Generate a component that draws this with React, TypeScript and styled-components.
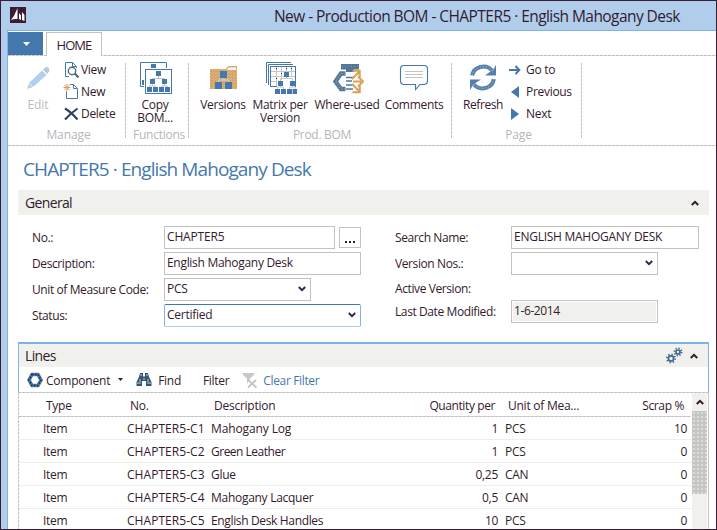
import React from "react";
import styled, { createGlobalStyle } from "styled-components";

const ink = "#331a2e";
const blue = "#4478ad";
const sky = "#7fb2e8";
const grey = "#c4c2bd";
const panel = "#f0f1ec";
const orange = "#d9a057";
const dashH = "repeating-linear-gradient(90deg, #c2c2c2 0 3px, #e6e6e6 3px 4px)";
const dashV = "repeating-linear-gradient(180deg, #c2c2c2 0 3px, #f2f2f2 3px 4px)";

const Global = createGlobalStyle`
  * { box-sizing: border-box; }
  body { margin: 0; background: #fff; overflow: hidden; }
`;

const Window = styled.div`
  width: 717px;
  height: 530px;
  border: 1px solid #3c1c32;
  display: flex;
  flex-direction: column;
  background: #b0ceec;
  color: ${ink};
  font: 12px/16px "Open Sans", "Noto Sans", sans-serif;
  letter-spacing: -0.4px;
  white-space: nowrap;
  overflow: hidden;
`;

const TitleBar = styled.header`
  height: 29px;
  flex: none;
  display: flex;
  padding-left: 9px;
`;
const AppLogo = styled.svg`
  width: 16px;
  height: 16px;
  margin-top: 6px;
`;
const WindowTitle = styled.h1`
  margin: 3px 0 0 248px;
  font-size: 15.5px;
  font-weight: 400;
  line-height: 24px;
  letter-spacing: -0.56px;
`;

const Client = styled.main`
  flex: 1;
  min-height: 0;
  margin-left: 6px;
  border-left: 1px solid ${sky};
  border-top: 1px solid ${sky};
  background: #fff;
  display: flex;
  flex-direction: column;
`;

const TabRow = styled.div`
  height: 25px;
  flex: none;
  display: flex;
  padding-top: 1px;
  background: ${dashH} bottom / 100% 1px no-repeat;
`;
const AppMenu = styled.button`
  width: 35px;
  height: 23px;
  border: 0;
  padding: 0;
  background: ${blue};
  display: flex;
  align-items: center;
  justify-content: center;
`;
const HomeTab = styled.div`
  width: 56px;
  height: 24px;
  margin-left: 3px;
  border: 1px solid ${grey};
  border-bottom: 0;
  background: #fff;
  font-size: 13px;
  line-height: 25px;
  text-align: center;
  letter-spacing: -0.95px;
`;

const Ribbon = styled.div`
  height: 90px;
  flex: none;
  display: flex;
  padding-top: 7px;
  background: ${dashH} bottom / 100% 1px no-repeat;
`;
const Group = styled.section<{ $w: number }>`
  width: ${(p) => p.$w}px;
  height: 75px;
  flex: none;
  display: flex;
  flex-direction: column;
  background: ${dashV} right / 1px 100% no-repeat;
`;
const GroupBody = styled.div<{ $pad: number }>`
  display: flex;
  flex: none;
  height: 64px;
  padding-left: ${(p) => p.$pad}px;
`;
const GroupName = styled.div<{ $ls?: number }>`
  text-align: center;
  color: #b4b6b8;
  line-height: 16px;
  padding-left: 3px;
  letter-spacing: ${(p) => p.$ls ?? -0.1}px;
`;
const Big = styled.div<{ $w: number; $off?: boolean; $ls?: number }>`
  width: ${(p) => p.$w}px;
  flex: none;
  display: flex;
  flex-direction: column;
  align-items: center;
  margin-top: -2px;
  line-height: 13px;
  text-align: center;
  letter-spacing: ${(p) => p.$ls ?? -0.3}px;
  color: ${(p) => (p.$off ? "#bcbdbe" : ink)};
`;
const BigIcon = styled.svg`
  width: 34px;
  height: 34px;
  margin-bottom: 3px;
  flex: none;
`;
const SmallList = styled.div<{ $ml: number }>`
  margin: -4px 0 0 ${(p) => p.$ml}px;
  display: flex;
  flex-direction: column;
`;
const Small = styled.div<{ $ls?: number }>`
  height: 22px;
  display: flex;
  align-items: center;
  letter-spacing: ${(p) => p.$ls ?? -0.3}px;
`;
const SmallIcon = styled.svg`
  width: 18px;
  height: 18px;
`;

const PageTitle = styled.h2`
  margin: 10px 0 0 15px;
  height: 34px;
  flex: none;
  font-size: 19px;
  line-height: 26px;
  font-weight: 400;
  color: ${blue};
  letter-spacing: -0.91px;
`;
const BarHead = styled.div<{ $h: number; $pl?: number }>`
  height: ${(p) => p.$h}px;
  flex: none;
  background: ${panel};
  display: flex;
  align-items: center;
  padding: 0 10px 0 ${(p) => p.$pl ?? 7}px;
  font-size: 14px;
  letter-spacing: -0.65px;
`;
const Spacer = styled.div`
  flex: 1;
`;
const General = styled.section`
  width: 691px;
  margin-left: 10px;
  height: 152px;
  flex: none;
`;
const Form = styled.div`
  display: flex;
  padding-top: 11px;
`;
const Column = styled.div<{ $ml: number }>`
  margin-left: ${(p) => p.$ml}px;
`;
const Row = styled.div<{ $h?: number; $label: number }>`
  display: grid;
  grid-template-columns: ${(p) => p.$label}px auto;
  justify-content: start;
  height: ${(p) => p.$h ?? 26}px;
`;
const Label = styled.label<{ $ls?: number }>`
  line-height: 23px;
  letter-spacing: ${(p) => p.$ls ?? -0.4}px;
`;
const FieldWrap = styled.div`
  display: flex;
  gap: 4px;
  align-items: center;
  height: 23px;
`;
const Field = styled.div<{ $w: number; $focus?: boolean; $ro?: boolean; $ls?: number }>`
  width: ${(p) => p.$w}px;
  height: 23px;
  border: 1px solid ${(p) => (p.$focus ? "#7fb2e8" : grey)};
  ${(p) => p.$focus && `border-top-color: ${blue}; border-bottom-color: #a9cbec; border-radius: 2px;`}
  background: ${(p) => (p.$ro ? panel : "#fff")};
  ${(p) => p.$ro && "box-shadow: inset 0 0 0 1px #fff;"}
  display: flex;
  align-items: center;
  justify-content: space-between;
  padding: 0 4px 1px 2px;
  letter-spacing: ${(p) => p.$ls ?? -0.3}px;
`;
const Assist = styled.button`
  width: 22px;
  height: 21px;
  border: 1px solid ${grey};
  background: #fff;
  padding: 8px 0 0;
  display: flex;
  justify-content: center;
  align-items: center;
`;

const Lines = styled.section`
  width: 691px;
  margin-left: 10px;
  flex: 1;
  min-height: 0;
  display: flex;
  flex-direction: column;
`;
const Focused = styled.div`
  border: 1px solid ${sky};
  border-top-width: 2px;
  border-bottom: 0;
  flex: none;
`;
const Toolbar = styled.div`
  height: 25px;
  display: flex;
  align-items: center;
  padding: 0 0 0 8px;
`;
const Tool = styled.span<{ $ml: number; $c?: string; $ls?: number }>`
  margin-left: ${(p) => p.$ml}px;
  color: ${(p) => p.$c ?? ink};
  letter-spacing: ${(p) => p.$ls ?? -0.3}px;
  padding-top: 2px;
`;
const Glyph = styled.svg<{ $w: number; $h: number; $ml?: number }>`
  width: ${(p) => p.$w}px;
  height: ${(p) => p.$h}px;
  margin-left: ${(p) => p.$ml ?? 0}px;
  flex: none;
`;
const GridBox = styled.div`
  flex: 1;
  min-height: 0;
  display: flex;
  border-right: 1px solid ${grey};
  background: ${dashH} top / 100% 1px no-repeat, ${dashV} left / 1px 100% no-repeat;
  padding: 1px 1px 0 1px;
`;
const Table = styled.div`
  width: 672px;
  flex: none;
  overflow: hidden;
`;
const cols = "108px 84px 184px 103px 109px 80px";
const HeadRow = styled.div`
  display: grid;
  grid-template-columns: ${cols};
  height: 24px;
  line-height: 25px;
  background: ${dashH} bottom / 100% 1px no-repeat;
  & > * { padding: 0 3px; }
`;
const BodyRow = styled.div`
  display: grid;
  grid-template-columns: ${cols};
  height: 23px;
  line-height: 23px;
  border-bottom: 1px solid #eeeeed;
`;
const Cell = styled.div<{ $r?: boolean; $pl?: number; $ls?: number }>`
  text-align: ${(p) => (p.$r ? "right" : "left")};
  padding-left: ${(p) => p.$pl ?? 0}px;
  letter-spacing: ${(p) => p.$ls ?? -0.3}px;
`;
const HCell = styled.div<{ $r?: boolean; $ind?: number; $ls?: number }>`
  text-align: ${(p) => (p.$r ? "right" : "left")};
  text-indent: ${(p) => p.$ind ?? 0}px;
  letter-spacing: ${(p) => p.$ls ?? -0.25}px;
`;
const Scroll = styled.div`
  width: 15px;
  flex: none;
  background: ${panel};
  margin-left: 1px;
`;
const ScrollUp = styled.div`
  height: 18px;
  display: flex;
  align-items: center;
  justify-content: center;
`;
const Thumb = styled.div`
  height: 83px;
  background: radial-gradient(#dcdcd8 0.7px, transparent 0.9px) 0 0 / 4px 4px #c5c5c4;
`;

const Chevron = ({ up, ml }: { up?: boolean; ml?: number }) => (
  <Glyph $w={8} $h={6} $ml={ml} viewBox="0 0 8 6">
    <path d={up ? "M0.8 5 4 1.8 7.2 5" : "M0.8 1 4 4.2 7.2 1"} fill="none" stroke={up ? ink : "#2b2c55"} strokeWidth="2" />
  </Glyph>
);

const Sq = ({ at, s = 5 }: { at: number[][]; s?: number }) => (
  <>{at.map(([x, y]) => <rect key={`${x}-${y}`} x={x} y={y} width={s} height={s} fill={blue} />)}</>
);

const EditIcon = () => (
  <BigIcon viewBox="0 0 34 34">
    <path d="M6 28 8 22 21 9.5 25.5 14 12 26Z" fill="#b2d0ec" />
    <path d="M22 8.5 24.5 6.2Q26.5 5.5 28.2 7.5 28.8 9 28 10.7L26 13Z" fill="#b2cbe0" />
    <path d="M8 22.5 12 26" stroke="#e4eef8" strokeWidth="1" />
  </BigIcon>
);
const CopyIcon = () => (
  <BigIcon viewBox="0 0 34 34">
    <path d="M28.5 7V1.5H2.5V25.5H6" fill="none" stroke={blue} />
    <rect x="13" y="3" width="5" height="4" fill={blue} /><rect x="4" y="19" width="2" height="5" fill={blue} />
    <rect x="7.5" y="8.5" width="26" height="24" fill="#fff" stroke={blue} />
    <path d="M20.5 15v3M14.5 20v-2.5H26.5V20M14.5 23v2M26.5 23v2M11.5 27v-2H17.5V27M23.5 27v-2H29.5V27" fill="none" stroke="#c8c4bf" />
    <Sq at={[[18, 10], [12, 18], [24, 18], [9, 26], [15, 26], [21, 26], [27, 26]]} />
  </BigIcon>
);
const VersionsIcon = () => (
  <BigIcon viewBox="0 0 34 34">
    <defs><pattern id="weave" width="3" height="3" patternUnits="userSpaceOnUse"><rect width="3" height="3" fill="#dba35c" /><rect width="1" height="1" fill="#c9bfb0" /><rect x="1" y="2" width="1" height="1" fill="#c9bfb0" /></pattern></defs>
    <path d="M4 28V8H20L22 5H31V28Z" fill="url(#weave)" />
    <path d="M22.5 6.5H30V9H21Z" fill="#fff" />
    <path d="M17.5 16v3M12.5 21v-2H22.5V21" fill="none" stroke="#c8c8c8" strokeWidth="1.4" />
    <Sq s={7} at={[[14, 10], [9, 21], [19, 21]]} />
  </BigIcon>
);
const MatrixIcon = () => (
  <BigIcon viewBox="0 0 34 34">
    <path d="M28 1.5H3.5V22M30 3.5H5.5V24" fill="none" stroke={blue} />
    <rect x="7.5" y="5.5" width="25" height="20" fill="#fff" stroke={blue} />
    <path d="M8 10.5H32M8 15.5H32M8 20.5H32M13.5 6V25M18.5 6V25M23.5 6V25M28.5 6V25" stroke="#c6c6c6" />
    <path d="M13 7h1v1h-1zM18 12h1v1h-1zM28 7h1v1h-1zM13 17h1v1h-1zM23 7h1v1h-1z" fill={ink} />
    <path d="M19 16H32V26H34V34H11V26H14V19H19Z" fill="#fff" />
    <path d="M23.5 15v3M17.5 20v-2.5H29.5V20M17.5 23v3.5M29.5 23v3.5M14.5 28v-2H20.5V28M26.5 28v-2H32V28" fill="none" stroke="#c8c8c8" />
    <Sq at={[[21, 11], [15, 20], [27, 20], [12, 28], [18, 28], [24, 28], [29.6, 28]]} />
  </BigIcon>
);
const WhereIcon = () => (
  <BigIcon viewBox="0 0 34 34">
    <path d="M11 3H29V8.5H24V11H16V8.5H11Z" fill="#53779c" />
    <path d="M12 5.5H28" stroke="#a89272" strokeDasharray="1 2" />
    <path d="M15.5 12.5H11L5.5 20.5 11 28H15.5" fill="none" stroke="#4f78a2" strokeWidth="4.4" />
    <path d="M15.5 12.5H11L5.5 20.5 11 28H15.5" fill="none" stroke={orange} strokeWidth="1.2" strokeDasharray="1 2" />
    <path d="M16 16.5H24M16 20H22M16 24H24M16 28H23" stroke={blue} strokeWidth="1.6" />
    <path d="M22 18 29 11M22.5 9.7H29.7V16.5M23 20.5H31M28 15.5 33 20.5 28 25.5M22 23 29 30M22.5 31.3H29.7V24" fill="none" stroke={orange} strokeWidth="2.1" />
  </BigIcon>
);
const CommentIcon = () => (
  <BigIcon viewBox="0 0 34 34">
    <path d="M6 4.5H28Q30.5 5 30.5 8V20Q30.5 23 27.5 23.5H23L18.5 28.5V23.5H6.5Q3.5 23 3.5 20V8Q3.5 5 6 4.5Z" fill="#fff" stroke={blue} strokeWidth="1.1" />
    <path d="M8 10.5H26M8 13.5H26M8 16.5H26" stroke="#c3c3c3" />
  </BigIcon>
);
const RefreshIcon = () => (
  <BigIcon viewBox="0 0 34 34">
    <g fill="none" stroke="#557fac" strokeWidth="4">
      <path d="M6.2 14.5A11.2 10.5 0 0 1 26 9.5" />
      <path d="M27.8 18A11.2 10.5 0 0 1 8 23.5" />
    </g>
    <path d="M30 4V14.5H19L23 11.5 27 9Z" fill="#557fac" /><path d="M4 29V18.5H15L11 21 7 24Z" fill="#557fac" />
    <path d="M6.2 14.5A11.2 10.5 0 0 1 26 9.5M27.8 18A11.2 10.5 0 0 1 8 23.5" fill="none" stroke="#bdd3e8" strokeWidth="1" strokeDasharray="1 2" />
  </BigIcon>
);
const Doc = "M3.5 1.5H10.5L14.5 5.5V15.5H3.5Z";
const ViewIcon = () => (
  <SmallIcon viewBox="0 0 18 18">
    <path d="M13.5 7V5.5L9.5 1.5H2.5V15.5H6M9.5 1.5V5.5H13" fill="none" stroke={blue} />
    <circle cx="9" cy="10" r="3.7" fill="#fff" stroke="#53687e" strokeWidth="1.4" />
    <path d="m11.8 12.5 3.6 4" stroke="#53687e" strokeWidth="2.2" />
  </SmallIcon>
);
const NewIcon = () => (
  <SmallIcon viewBox="0 0 18 18">
    <path d={Doc} fill="#fff" stroke={blue} /><path d="M10.5 2V5.5H14" fill="none" stroke={blue} />
    <circle cx="4" cy="4.5" r="4" fill="#fff" />
    <path d="M4 1V8M0.5 4.5H7.5M1.5 2 6.5 7M6.5 2 1.5 7" stroke={orange} />
  </SmallIcon>
);
const DeleteIcon = () => (
  <SmallIcon viewBox="0 0 18 18">
    <path d="M2 3.5Q8 7 14.5 14.5M14.5 3.5Q8 8 2 14.5" fill="none" stroke="#2d4260" strokeWidth="2.1" />
  </SmallIcon>
);
const Nav = ({ d, line }: { d: string; line?: boolean }) => (
  <SmallIcon viewBox="0 0 18 18">
    <path d={d} fill={line ? "none" : blue} stroke={line ? blue : "none"} strokeWidth="2" />
  </SmallIcon>
);

const gear = (cx: number, cy: number, r: number) => (
  <g stroke="#41698f" fill="none">
    <circle cx={cx} cy={cy} r={r} strokeWidth="1.7" />
    <circle cx={cx} cy={cy} r={r + 1.6} strokeWidth="1.7" strokeDasharray={`1.3 ${((r + 1.6) * 2 * Math.PI) / 8 - 1.3}`} />
  </g>
);

const data = [
  { no: "CHAPTER5-C1", desc: "Mahogany Log", qty: "1", unit: "PCS", scrap: "10", fit: -0.12 },
  { no: "CHAPTER5-C2", desc: "Green Leather", qty: "1", unit: "PCS", scrap: "0", fit: -0.5 },
  { no: "CHAPTER5-C3", desc: "Glue", qty: "0,25", unit: "CAN", scrap: "0", fit: -0.3 },
  { no: "CHAPTER5-C4", desc: "Mahogany Lacquer", qty: "0,5", unit: "CAN", scrap: "0", fit: -0.28 },
  { no: "CHAPTER5-C5", desc: "English Desk Handles", qty: "10", unit: "PCS", scrap: "0", fit: -0.35 },
];

export default function App() {
  return (
    <Window>
      <Global />
      <TitleBar>
        <AppLogo viewBox="0 0 16 16">
          <rect width="16" height="16" fill="#3c1c32" />
          <path d="M1 13Q5 8 7.5 1V12Q4 11.5 1 13ZM9 6 11 8.5V13L9 12ZM12 5 14.5 8V14L12 13Z" fill="#fff" />
        </AppLogo>
        <WindowTitle>New - Production BOM - CHAPTER5 · English Mahogany Desk</WindowTitle>
      </TitleBar>
      <Client>
        <TabRow>
          <AppMenu><Glyph $w={7} $h={4} $ml={2} viewBox="0 0 7 4"><path d="M0 0H7L3.5 4Z" fill="#fff" /></Glyph></AppMenu>
          <HomeTab>HOME</HomeTab>
        </TabRow>
        <Ribbon>
          <Group $w={118}>
            <GroupBody $pad={8}>
              <Big $w={44} $off $ls={-0.1}><EditIcon />Edit</Big>
              <SmallList $ml={3}>
                <Small><ViewIcon />View</Small>
                <Small><NewIcon />New</Small>
                <Small><DeleteIcon />Delete</Small>
              </SmallList>
            </GroupBody>
            <GroupName>Manage</GroupName>
          </Group>
          <Group $w={63}>
            <GroupBody $pad={5}><Big $w={48}><CopyIcon />Copy<br />BOM...</Big></GroupBody>
            <GroupName $ls={-0.25}>Functions</GroupName>
          </Group>
          <Group $w={263}>
            <GroupBody $pad={9}>
              <Big $w={50}><VersionsIcon />Versions</Big>
              <Big $w={64}><MatrixIcon />Matrix per<br />Version</Big>
              <Big $w={70}><WhereIcon />Where-used</Big>
              <Big $w={64}><CommentIcon />Comments</Big>
            </GroupBody>
            <GroupName $ls={-0.3}>Prod. BOM</GroupName>
          </Group>
          <Group $w={130}>
            <GroupBody $pad={9}>
              <Big $w={44} $ls={-0.4}><RefreshIcon />Refresh</Big>
              <SmallList $ml={3}>
                <Small><Nav line d="M1 9H11M7.5 5 11.3 9 7.5 13" />Go to</Small>
                <Small><Nav d="M11 3V15L3 9Z" />Previous</Small>
                <Small><Nav d="M3 3V15L11 9Z" />Next</Small>
              </SmallList>
            </GroupBody>
            <GroupName>Page</GroupName>
          </Group>
        </Ribbon>
        <PageTitle>CHAPTER5 · English Mahogany Desk</PageTitle>
        <General>
          <BarHead $h={25}>General<Spacer /><Chevron up /></BarHead>
          <Form>
            <Column $ml={14}>
              <Row $label={132}><Label>No.:</Label><FieldWrap><Field $w={171} $ls={-0.15}>CHAPTER5</Field><Assist><Glyph $w={11} $h={2} viewBox="0 0 11 2"><path d="M0 0h2v2H0zM4 0h2v2H4zM8 0h2v2H8z" fill={ink} /></Glyph></Assist></FieldWrap></Row>
              <Row $label={132}><Label>Description:</Label><Field $w={197}>English Mahogany Desk</Field></Row>
              <Row $label={132}><Label>Unit of Measure Code:</Label><Field $w={147}>PCS<Chevron /></Field></Row>
              <Row $label={132}><Label>Status:</Label><Field $w={197} $focus $ls={-0.25}>Certified<Chevron /></Field></Row>
            </Column>
            <Column $ml={34}>
              <Row $label={116}><Label>Search Name:</Label><Field $w={188} $ls={-0.26}>ENGLISH MAHOGANY DESK</Field></Row>
              <Row $label={116} $h={25}><Label>Version Nos.:</Label><Field $w={147}><span /><Chevron /></Field></Row>
              <Row $label={116} $h={23}><Label>Active Version:</Label></Row>
              <Row $label={116}><Label>Last Date Modified:</Label><Field $w={147} $ro $ls={-0.4}>1-6-2014</Field></Row>
            </Column>
          </Form>
        </General>
        <Lines>
          <Focused>
            <BarHead $h={23} $pl={6}>
              Lines<Spacer />
              <Glyph $w={18} $h={18} viewBox="0 0 18 18">{gear(6, 11.5, 2.6)}{gear(13, 5, 2)}</Glyph>
              <Chevron up ml={7} />
            </BarHead>
            <Toolbar>
              <Glyph $w={17} $h={16} viewBox="0 0 17 16">
                <path d="M5 2.5H11L14 8 11 13.5H5L2 8Z" fill="none" stroke="#4d7aa8" strokeWidth="3.6" />
                <path d="M5 2.5H11L14 8 11 13.5H5L2 8Z" fill="none" stroke="#1f2340" strokeWidth="1.5" strokeDasharray="1.5 1.5" />
              </Glyph>
              <Tool $ml={2} $ls={-0.22}>Component</Tool>
              <Glyph $w={5} $h={3} $ml={8} viewBox="0 0 5 3"><path d="M0 0H5L2.5 3Z" fill={ink} /></Glyph>
              <Glyph $w={16} $h={15} $ml={13} viewBox="0 0 16 15">
                <path d="M4 1H7V4L8 5 9 4V1H12L13 5 15.5 10V14H10V9H6V14H0.5V10L3 5Z" fill="#365372" />
                <path d="M2 10V12M4 7V12M12 7V12M14 10V12M5 2V4M11 2V4M7 7H9" stroke="#b9cfe6" />
              </Glyph>
              <Tool $ml={6}>Find</Tool>
              <Tool $ml={22}>Filter</Tool>
              <Glyph $w={16} $h={16} $ml={13} viewBox="0 0 16 16">
                <path d="M0.5 1H12V3L8 6.5V8L6 10 5 12V6.5L1 3Z" fill="#c9c8c4" />
                <path d="M6 8 14.5 15.5M14 8 6 15.5" stroke="#c4c3bf" strokeWidth="1.8" />
              </Glyph>
              <Tool $ml={5} $c={blue} $ls={-0.35}>Clear Filter</Tool>
            </Toolbar>
          </Focused>
          <GridBox>
            <Table>
              <HeadRow>
                <HCell $ind={24}>Type</HCell>
                <HCell>No.</HCell>
                <HCell>Description</HCell>
                <HCell $r $ls={-0.4}>Quantity per</HCell>
                <HCell $ind={7}>Unit of Mea...</HCell>
                <HCell $r $ls={-0.35}>Scrap %</HCell>
              </HeadRow>
              {data.map((row) => (
                <BodyRow key={row.no}>
                  <Cell $pl={24}>Item</Cell>
                  <Cell $ls={0.05}>{row.no}</Cell>
                  <Cell $ls={row.fit}>{row.desc}</Cell>
                  <Cell $r>{row.qty}</Cell>
                  <Cell $pl={7}>{row.unit}</Cell>
                  <Cell $r>{row.scrap}</Cell>
                </BodyRow>
              ))}
            </Table>
            <Scroll><ScrollUp><Chevron up /></ScrollUp><Thumb /></Scroll>
          </GridBox>
        </Lines>
      </Client>
    </Window>
  );
}
